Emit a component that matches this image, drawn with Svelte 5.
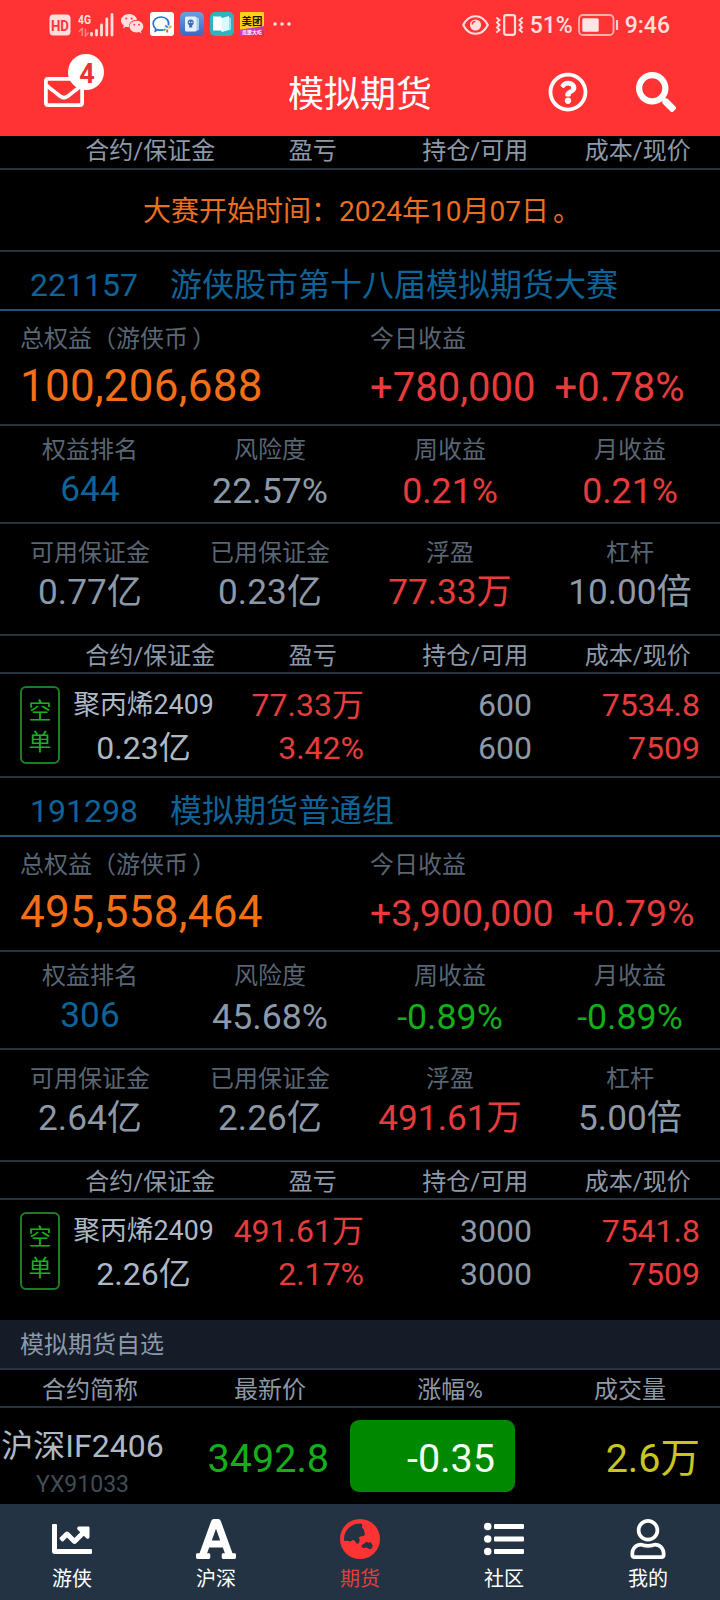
<script>
  const accounts = [
    {
      id: '221157',
      name: '游侠股市第十八届模拟期货大赛',
      equity: '100,206,688',
      gain: '+780,000',
      gainPct: '+0.78%',
      rank: '644',
      stats: [
        ['风险度', '22.57%', ''],
        ['周收益', '0.21%', 'up'],
        ['月收益', '0.21%', 'up']
      ],
      margin: [
        ['可用保证金', '0.77亿', ''],
        ['已用保证金', '0.23亿', ''],
        ['浮盈', '77.33万', 'up'],
        ['杠杆', '10.00倍', '']
      ],
      position: { name: '聚丙烯2409', margin: '0.23亿', pnl: '77.33万', pct: '3.42%', qty: '600', cost: '7534.8', price: '7509' }
    },
    {
      id: '191298',
      name: '模拟期货普通组',
      equity: '495,558,464',
      gain: '+3,900,000',
      gainPct: '+0.79%',
      rank: '306',
      stats: [
        ['风险度', '45.68%', ''],
        ['周收益', '-0.89%', 'down'],
        ['月收益', '-0.89%', 'down']
      ],
      margin: [
        ['可用保证金', '2.64亿', ''],
        ['已用保证金', '2.26亿', ''],
        ['浮盈', '491.61万', 'up'],
        ['杠杆', '5.00倍', '']
      ],
      position: { name: '聚丙烯2409', margin: '2.26亿', pnl: '491.61万', pct: '2.17%', qty: '3000', cost: '7541.8', price: '7509' }
    }
  ];
  const columns = ['合约/保证金', '盈亏', '持仓/可用', '成本/现价'];
</script>

{#snippet tableHead(first)}
  <div class="thead" class:first>
    {#each columns as c}<span>{c}</span>{/each}
  </div>
{/snippet}

<div class="screen">
  <header>
    <div class="status">
      <svg class="hd" width="22" height="22" viewBox="0 0 22 22">
        <rect x="0.5" y="0.5" width="21" height="21" rx="4" fill="#ffdede" />
        <text x="11" y="16.5" text-anchor="middle" font-size="15" font-weight="700" textLength="18" lengthAdjust="spacingAndGlyphs" fill="#f33">HD</text>
      </svg>
      <svg class="signal" width="36" height="24" viewBox="0 0 36 24">
        <text x="0" y="10.5" font-size="13" font-weight="700" textLength="13" lengthAdjust="spacingAndGlyphs" fill="#ffdede">4G</text>
        <path d="M4.300 23v-7.500L1 18.500" stroke="#ff8585" stroke-width="1.500" fill="none" />
        <path d="M7.500 15.500V23l3-3.200" stroke="#ff8585" stroke-width="1.500" fill="none" />
        <path d="M13.500 20.500v1.500M18.500 17.500v4.500M23.500 12v10M28.800 6v16M34 1.500v20.500" stroke="#ffdede" stroke-width="2.800" stroke-linecap="round" />
      </svg>
      <svg class="wechat" width="23" height="20" viewBox="0 0 23 20">
        <path fill="#ffdede" d="M8 0C3.600 0 0 2.900 0 6.600c0 2 1.100 3.800 2.900 5l-.9 2.700 3-1.600c1 .3 2 .5 3 .5C7.500 9 11 5.800 16 5.800 15.400 2.400 12 0 8 0z" />
        <path fill="#ffdede" d="M15.700 6.700c-4 0-7.200 2.600-7.200 5.900s3.200 5.900 7.200 5.900c.9 0 1.700-.1 2.500-.4l2.400 1.400-.7-2.300c1.500-1.100 2.400-2.700 2.400-4.600 0-3.300-2.900-5.900-6.600-5.900z" />
        <g fill="#f33"><circle cx="5.300" cy="4.500" r="1" /><circle cx="10.600" cy="4.500" r="1" /><circle cx="13.300" cy="10.700" r=".9" /><circle cx="18" cy="10.700" r=".9" /></g>
      </svg>
      <svg class="app" width="24" height="24" viewBox="0 0 24 24">
        <rect width="24" height="24" rx="3" fill="#fff" />
        <path d="M18.500 13.500C19.500 8.500 16 5 11.200 5 6.500 5 3.200 8 3.200 11.700c0 2.300 1 3.900 2.500 5.100l-.4 2.200 2.600-1.300c1.800.6 3.600.7 5.300.2" fill="none" stroke="#2a76c4" stroke-width="1.700" />
        <path d="M15.200 13.500l2.600 2" stroke="#2f8bd8" stroke-width="2" /><path d="M18.500 16.200l3-2" stroke="#f0b52a" stroke-width="2" /><path d="M17.200 17.500v3" stroke="#e6583c" stroke-width="2" /><path d="M15.500 17l-2 1.500" stroke="#4cb34a" stroke-width="2" />
      </svg>
      <svg class="app" width="24" height="24" viewBox="0 0 24 24">
        <defs><linearGradient id="vault" x1="0" y1="0" x2="0" y2="1"><stop offset="0" stop-color="#6a9fe4" /><stop offset="1" stop-color="#3a66c0" /></linearGradient></defs>
        <rect width="24" height="24" rx="5" fill="url(#vault)" />
        <rect x="8" y="5.500" width="11" height="13" rx="1.500" fill="#a9caf3" />
        <rect x="5" y="4.500" width="11.500" height="15" rx="1.500" fill="#e2f0ff" />
        <circle cx="10.700" cy="10.500" r="3" fill="#3c6cb8" /><rect x="9.200" y="12.500" width="3" height="3" fill="#3c6cb8" />
        <circle cx="9.500" cy="10.300" r=".8" fill="#e2f0ff" /><circle cx="11.900" cy="10.300" r=".8" fill="#e2f0ff" />
      </svg>
      <svg class="app" width="24" height="24" viewBox="0 0 24 24">
        <rect width="24" height="24" rx="5" fill="#2eb3bf" />
        <path d="M12 6l7-2v14l-7 2z" fill="#d9fbff" /><path d="M19 5.500l2 .2V18l-2 .5z" fill="#8be3ea" />
        <path d="M3 4.500h8l1 1.500v14l-1-1.500H3z" fill="#fff" />
      </svg>
      <svg class="app" width="24" height="24" viewBox="0 0 24 24">
        <defs><linearGradient id="promo" x1="0" y1="0" x2="1" y2="1"><stop offset="0" stop-color="#f76b2f" /><stop offset=".4" stop-color="#c838d8" /><stop offset="1" stop-color="#e8204e" /></linearGradient></defs>
        <rect width="24" height="24" rx="1" fill="#ffd21c" />
        <path d="M0 17.500L24 14v10H0z" fill="url(#promo)" />
        <text x="12" y="12.800" text-anchor="middle" font-size="10.500" font-weight="700" fill="#1c1600">美团</text>
        <text x="12" y="22.200" text-anchor="middle" font-size="5" font-weight="700" fill="#fff">瓜歌大吃</text>
      </svg>
      <svg class="dots" width="18" height="4" viewBox="0 0 18 4"><g fill="#ffdede"><circle cx="2" cy="2" r="1.800" /><circle cx="9" cy="2" r="1.800" /><circle cx="16" cy="2" r="1.800" /></g></svg>
      <div class="right">
        <svg width="27" height="20" viewBox="0 0 27 20">
          <path d="M1.200 10C4 4.500 8.500 1.200 13.500 1.200S23 4.500 25.800 10C23 15.500 18.500 18.800 13.500 18.800S4 15.500 1.200 10z" fill="none" stroke="#ffdede" stroke-width="2.100" />
          <circle cx="13.500" cy="10" r="5.600" fill="#ffdede" /><path d="M10.300 9.500a3 3 0 0 1 3-3" stroke="#f33" stroke-width="1.300" fill="none" />
        </svg>
        <svg class="vibrate" width="29" height="22" viewBox="0 0 29 22">
          <rect x="9.200" y="1.200" width="10.800" height="19.600" rx="2" fill="none" stroke="#ffdede" stroke-width="2.200" />
          <path d="M1.300 3.500L4.500 6 2 8.500 4.500 11 2 13.500 4.500 16 1.300 18.500M27.700 3.500L24.500 6 27 8.500 24.500 11 27 13.500 24.500 16 27.700 18.500" fill="none" stroke="#ffdede" stroke-width="1.900" />
        </svg>
        <span class="pct">51%</span>
        <svg width="41" height="22" viewBox="0 0 41 22">
          <rect x="1" y="1" width="34.500" height="20" rx="4" fill="none" stroke="#ffb0b0" stroke-width="1.800" />
          <rect x="4.300" y="4.300" width="16.400" height="13.400" rx="1.500" fill="#ffe6e6" /><path d="M39 6v10" stroke="#ffc8c8" stroke-width="2.200" />
        </svg>
        <span class="time">9:46</span>
      </div>
    </div>
    <div class="bar">
      <div class="mail">
        <svg width="40" height="40" viewBox="0 0 512 512" fill="#fff"><path d="M464 64H48C21.490 64 0 85.490 0 112v288c0 26.510 21.490 48 48 48h416c26.510 0 48-21.490 48-48V112c0-26.510-21.490-48-48-48zm0 48v40.805c-22.422 18.259-58.168 46.651-134.587 106.490-16.841 13.247-50.201 45.072-73.413 44.701-23.208.375-56.579-31.459-73.413-44.701C106.180 199.465 70.425 171.067 48 152.805V112h416zM48 400V214.398c22.914 18.251 55.409 43.862 104.938 82.646 21.857 17.205 60.134 55.186 103.062 54.955 42.717.231 80.509-37.199 103.053-54.947 49.528-38.783 82.032-64.401 104.947-82.653V400H48z" /></svg>
        <span class="count">4</span>
      </div>
      <h1>模拟期货</h1>
      <div class="actions">
        <svg width="40" height="40" viewBox="0 0 512 512" fill="#fff"><path d="M256 8C119.043 8 8 119.083 8 256c0 136.997 111.043 248 248 248s248-111.003 248-248C504 119.083 392.957 8 256 8zm0 448c-110.532 0-200-89.431-200-200 0-110.495 89.472-200 200-200 110.491 0 200 89.471 200 200 0 110.530-89.431 200-200 200zm107.244-255.200c0 67.052-72.421 68.084-72.421 92.863V300c0 6.627-5.373 12-12 12h-45.647c-6.627 0-12-5.373-12-12v-8.659c0-35.745 27.100-50.034 47.579-61.516 17.561-9.845 28.324-16.541 28.324-29.579 0-17.246-21.999-28.693-39.784-28.693-23.189 0-33.894 10.977-48.942 29.969-4.057 5.120-11.460 6.071-16.666 2.124l-27.824-21.098c-5.107-3.872-6.251-11.066-2.644-16.363C184.846 131.491 214.940 112 261.794 112c49.071 0 101.450 38.304 101.450 88.800zM298 368c0 23.159-18.841 42-42 42s-42-18.841-42-42 18.841-42 42-42 42 18.841 42 42z" /></svg>
        <svg width="40" height="40" viewBox="0 0 512 512" fill="#fff"><path d="M505 442.700L405.300 343c-4.500-4.500-10.600-7-17-7H372c27.600-35.300 44-79.700 44-128C416 93.100 322.900 0 208 0S0 93.100 0 208s93.100 208 208 208c48.300 0 92.700-16.400 128-44v16.300c0 6.400 2.500 12.500 7 17l99.700 99.700c9.400 9.400 24.600 9.400 33.900 0l28.300-28.300c9.400-9.400 9.400-24.600.1-34zM208 336c-70.700 0-128-57.200-128-128 0-70.700 57.200-128 128-128 70.700 0 128 57.200 128 128 0 70.700-57.200 128-128 128z" /></svg>
      </div>
    </div>
  </header>

  {@render tableHead(true)}
  <div class="notice">大赛开始时间：2024年10月07日<i>。</i></div>

  {#each accounts as a}
    <section>
      <div class="title"><span>{a.id}</span><span>{a.name}</span></div>
      <div class="equity">
        <div class="total"><label>总权益<i class="open">（</i>游侠币<i>）</i></label><b>{a.equity}</b></div>
        <div class="today"><label>今日收益</label><p class="up" class:long={a.gain.length > 8}><span>{a.gain}</span><span>{a.gainPct}</span></p></div>
      </div>
      <div class="stats">
        <div><label>权益排名</label><b class="rank">{a.rank}</b></div>
        {#each a.stats as [label, value, tone]}<div><label>{label}</label><b class={tone}>{value}</b></div>{/each}
      </div>
      <div class="stats margin">
        {#each a.margin as [label, value, tone]}<div><label>{label}</label><b class={tone}>{value}</b></div>{/each}
      </div>
      {@render tableHead(false)}
      <div class="position">
        <div class="side"><span>空</span><span>单</span></div>
        <div class="contract"><span class="cname">{a.position.name}</span><span>{a.position.margin}</span></div>
        <div class="up"><span>{a.position.pnl}</span><span>{a.position.pct}</span></div>
        <div><span>{a.position.qty}</span><span>{a.position.qty}</span></div>
        <div class="up"><span>{a.position.cost}</span><span>{a.position.price}</span></div>
      </div>
    </section>
  {/each}

  <div class="watch-title">模拟期货自选</div>
  <div class="watch-head"><span>合约简称</span><span>最新价</span><span>涨幅%</span><span>成交量</span></div>
  <div class="quote">
    <div class="qname"><span>沪深IF2406</span><small>YX91033</small></div>
    <div class="last">3492.8</div>
    <div class="change">-0.35</div>
    <div class="volume">2.6万</div>
  </div>

  <nav>
    <div>
      <svg width="40" height="40" viewBox="0 0 512 512" fill="#fff"><path d="M496 384H64V80c0-8.840-7.160-16-16-16H16C7.160 64 0 71.160 0 80v336c0 17.670 14.330 32 32 32h464c8.840 0 16-7.160 16-16v-32c0-8.840-7.160-16-16-16zM464 96H345.940c-21.380 0-32.090 25.850-16.970 40.970l32.400 32.400L288 242.750l-73.370-73.370c-12.500-12.500-32.760-12.500-45.250 0l-68.690 68.690c-6.250 6.250-6.250 16.380 0 22.630l22.620 22.620c6.250 6.250 16.380 6.250 22.630 0L192 237.250l73.370 73.370c12.500 12.500 32.760 12.500 45.250 0l96-96 32.400 32.400c15.120 15.120 40.970 4.410 40.970-16.970V112c.01-8.840-7.150-16-15.990-16z" /></svg>
      <span>游侠</span>
    </div>
    <div>
      <svg width="40" height="40" viewBox="0 32 448 448" fill="#fff"><path d="M432 416h-23.410L277.530 53.690A32 32 0 0 0 247.580 32h-47.160a32 32 0 0 0-29.950 21.690L39.410 416H16a16 16 0 0 0-16 16v32a16 16 0 0 0 16 16h128a16 16 0 0 0 16-16v-32a16 16 0 0 0-16-16h-19.580l23.300-64h152.560l23.300 64H304a16 16 0 0 0-16 16v32a16 16 0 0 0 16 16h128a16 16 0 0 0 16-16v-32a16 16 0 0 0-16-16zM176.850 272L224 142.510 271.150 272z" /></svg>
      <span>沪深</span>
    </div>
    <div class="active">
      <svg width="40" height="40" viewBox="0 0 40 40">
        <circle cx="20" cy="20" r="20" fill="#f33" />
        <path d="M4 21.700C3.700 16 5.600 11.500 9.500 8.300 12.700 5.700 16 4.600 20.500 4.600l1.800 1-.3 3 2 2.400 1 4.500-1.500 1.500-3.200.6-1.800 1.200 1.500 2-1.500 3.600-2.200.2-1-2.200-1.600-1.300-1.800.3-1.700 1.300-1.600-.7z" fill="#243343" />
        <path d="M21.500 26.600l2.700-2 2.500-1.800 2 1.100 1.600-1.100 2.500 3.700-.8 3-2.800.4-2.400-1.500-3 .7-1.800-.5z" fill="#243343" />
      </svg>
      <span>期货</span>
    </div>
    <div>
      <svg width="40" height="40" viewBox="0 0 512 512" fill="#fff"><circle cx="48" cy="96" r="48" /><circle cx="48" cy="256" r="48" /><circle cx="48" cy="416" r="48" /><rect x="128" y="64" width="384" height="64" rx="14" /><rect x="128" y="224" width="384" height="64" rx="14" /><rect x="128" y="384" width="384" height="64" rx="14" /></svg>
      <span>社区</span>
    </div>
    <div>
      <svg width="40" height="40" viewBox="-32 0 512 512" fill="#fff"><path d="M313.600 304c-28.700 0-42.500 16-89.600 16-47.100 0-60.800-16-89.600-16C60.200 304 0 364.200 0 438.400V464c0 26.500 21.500 48 48 48h352c26.500 0 48-21.500 48-48v-25.600c0-74.200-60.200-134.400-134.400-134.400zM400 464H48v-25.600c0-47.600 38.800-86.400 86.400-86.400 14.600 0 38.300 16 89.600 16 51.700 0 74.900-16 89.600-16 47.600 0 86.400 38.800 86.400 86.400V464zM224 288c79.500 0 144-64.500 144-144S303.500 0 224 0 80 64.500 80 144s64.500 144 144 144zm0-240c52.900 0 96 43.100 96 96s-43.100 96-96 96-96-43.100-96-96 43.100-96 96-96z" /></svg>
      <span>我的</span>
    </div>
  </nav>
</div>

<style>
  :global(body) { background: #000; }
  .screen, .screen * { box-sizing: border-box; }
  .screen {
    width: 720px;
    height: 1600px;
    overflow: hidden;
    background: #000;
    color: #8c99a8;
    font-family: Roboto, 'Noto Sans CJK SC', sans-serif;
  }
  svg { display: block; flex: none; }
  b { font-weight: 400; }
  i { display: inline-block; font-style: normal; transform: translateX(4px); }
  i.open { transform: none; }
  p, h1 { margin: 0; }
  span, small { white-space: nowrap; }

  header { height: 136px; background: #f33; color: #fff; }
  .status { display: flex; align-items: center; height: 48px; padding-left: 49px; }
  .hd { margin-top: 2px; }
  .signal { margin-left: 7px; margin-top: 1px; }
  .wechat { margin-left: 7px; }
  .app { margin-left: 6px; }
  .dots { margin-left: 9px; }
  .right { display: flex; align-items: center; margin-left: auto; padding: 1px 50px 0 0; color: #ffdede; font-size: 23px; font-weight: 500; line-height: 24px; }
  .vibrate { margin: 0 6px 0 6px; }
  .pct { margin: 2px 5px 0 0; }
  .time { margin: 2px 0 0 6px; }
  .bar { display: grid; grid-template-columns: 1fr auto 1fr; align-items: center; height: 88px; padding: 0 44px; }
  .mail { position: relative; width: 40px; }
  .count {
    position: absolute;
    left: 24px;
    top: -18px;
    width: 36px;
    height: 36px;
    padding-left: 2px;
    border-radius: 50%;
    background: #fff;
    color: #e63434;
    font-size: 27px;
    font-weight: 700;
    line-height: 41px;
    text-align: center;
  }
  h1 { font-size: 36px; font-weight: 400; line-height: 40px; padding-top: 6px; }
  .actions { display: flex; justify-content: flex-end; gap: 48px; }

  .thead {
    display: grid;
    grid-template-columns: repeat(4, 1fr);
    align-items: end;
    height: 38px;
    padding: 0 1px 0 69px;
    border-bottom: 2px solid #26333f;
    font-size: 24px;
    line-height: 32px;
    text-align: center;
  }
  .thead.first { align-items: start; height: 34px; line-height: 30px; }
  .notice { height: 82px; padding-top: 2px; border-bottom: 2px solid #26333f; color: #ec6f1f; font-size: 28px; line-height: 80px; text-align: center; }

  .title { display: flex; gap: 32px; height: 59px; padding: 9px 30px 0; border-bottom: 2px solid #284f72; color: #0f6396; font-size: 32px; line-height: 48px; }
  .equity { display: grid; grid-template-columns: 350px 1fr; height: 115px; padding: 12px 0 0 20px; border-bottom: 2px solid #26333f; }
  label { display: block; color: #596674; font-size: 24px; line-height: 32px; }
  .total b { display: block; color: #f36f17; font-size: 44px; letter-spacing: 0.250px; line-height: 62px; }
  .today p { display: flex; gap: 19px; font-size: 40px; line-height: 65px; }
  .today .long { font-size: 37.500px; line-height: 64px; }
  .up { color: #e63c3c; }
  .down { color: #16ad1b; }

  .stats { display: grid; grid-template-columns: repeat(4, 1fr); height: 98px; padding-top: 12px; border-bottom: 2px solid #26333f; text-align: center; }
  .stats label { line-height: 25px; }
  .stats b { display: block; font-size: 35.700px; line-height: 56px; }
  .stats .rank { color: #0f6396; font-size: 35.200px; line-height: 52px; }
  .margin { height: 112px; padding-top: 16px; }
  .margin label { line-height: 26px; }
  .margin b { font-size: 35.200px; line-height: 53px; }

  .position {
    display: grid;
    grid-template-columns: 52px 143px 149px 168px 168px;
    height: 104px;
    padding: 10px 20px 0;
    border-bottom: 2px solid #26333f;
    font-size: 32px;
    line-height: 43px;
    text-align: right;
  }
  .position > div { display: flex; flex-direction: column; }
  section:last-of-type .position { height: 106px; border-color: transparent; }
  .position .side {
    width: 40px;
    height: 78px;
    margin-top: 2px;
    padding-top: 8px;
    border: 2px solid #1b7d1f;
    border-radius: 6px;
    color: #18b01d;
    font-size: 23px;
    line-height: 31px;
    text-align: center;
  }
  .position .contract { color: #adb9c6; text-align: center; }
  .position .cname { font-size: 26.800px; }

  .watch-title { height: 50px; margin-top: 14px; padding-left: 20px; border-bottom: 2px solid #243343; background: #151b27; font-size: 24px; line-height: 51px; }
  .watch-head { display: grid; grid-template-columns: repeat(4, 1fr); align-items: end; height: 38px; border-bottom: 2px solid #26333f; font-size: 24px; line-height: 32px; text-align: center; }
  .quote { display: grid; grid-template-columns: 164px 166px 165px 1fr; height: 96px; font-size: 39.500px; line-height: 101px; text-align: right; }
  .qname { display: flex; flex-direction: column; align-items: center; padding: 19px 0 0 1px; color: #adb9c6; font-size: 32px; line-height: 38px; }
  .qname small { color: #414c57; font-size: 23px; line-height: 40px; }
  .last { padding-right: 1px; color: #16ad1b; }
  .change { margin: 12px 0 0 20px; width: 165px; height: 72px; padding-right: 20px; border-radius: 9px; background: #008800; color: #f4fff4; line-height: 77px; }
  .volume { padding-right: 20px; color: #c9c522; }

  nav { display: grid; grid-template-columns: repeat(5, 1fr); height: 96px; padding-top: 15px; background: #243343; color: #fff; font-size: 20px; line-height: 40px; }
  nav div { display: flex; flex-direction: column; align-items: center; }
  .active { color: #e63c3c; }
</style>
